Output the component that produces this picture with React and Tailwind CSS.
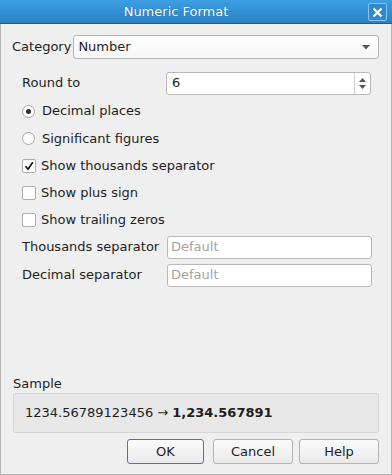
import React from 'react';

const font = { fontFamily: '"DejaVu Sans", "Liberation Sans", sans-serif' };

const Radio = ({ checked, label, h = 'h-[27px]' }) => (
  <div className={'flex items-center ' + h}>
    <div className="ml-[21px] flex h-[13px] w-[13px] items-center justify-center rounded-full border border-[#a9a9a9] bg-white">
      {checked && <div className="h-[5px] w-[5px] rounded-full bg-[#2e2e2e]"></div>}
    </div>
    <span className="ml-[7px]">{label}</span>
  </div>
);

const Check = ({ checked, label }) => (
  <div className="flex h-[27px] items-center">
    <div className="ml-[21px] flex h-[14px] w-[14px] items-center justify-center rounded-[2px] border border-[#adadad] bg-white">
      {checked && (
        <svg width="10" height="10" viewBox="0 0 10 10">
          <path d="M1.5 5.2 L4 8.2 L8.8 1.2" fill="none" stroke="#111" strokeWidth="1.7" />
        </svg>
      )}
    </div>
    <span className="ml-[5px]">{label}</span>
  </div>
);

const Field = ({ label, placeholder, value }) => (
  <div className="flex h-[28px] items-center">
    <span className="ml-[21px] w-[145px]">{label}</span>
    <div className="flex h-[23px] w-[205px] items-center rounded-[3px] border border-[#b9b9b9] bg-white pl-[3px]">
      {value ? <span>{value}</span> : <span className="text-[#a3a3a3]">{placeholder}</span>}
    </div>
  </div>
);

const Button = ({ children, primary, className }) => (
  <button
    className={
      'flex h-[25px] items-center justify-center rounded-[3px] border bg-gradient-to-b from-[#fbfbfb] to-[#e9e9e9] ' +
      (primary ? 'border-[#3d7bb5] from-[#f4f8fc] to-[#e2eaf2] ' : 'border-[#b3b3b3] ') +
      className
    }
  >
    {children}
  </button>
);

export default function App() {
  return (
    <div
      className="flex h-[475px] w-[392px] flex-col border-x border-b border-[#b5b5b5] bg-[#efefef] text-[13px] leading-[16px] text-[#1e1e1e]"
      style={font}
    >
      {/* title bar */}
      <div className="relative -mx-px flex h-[24px] shrink-0 items-center justify-center border-b border-[#1f5b8c] bg-gradient-to-b from-[#3d9fe3] to-[#2b80c4] pr-[40px]">
        <span className="text-white [text-shadow:0_0_1px_rgba(0,0,0,0.4)]">Numeric Format</span>
        <div className="absolute right-[5px] top-[3px] flex h-[18px] w-[19px] items-center justify-center rounded-[2px] border border-[#8cc3ee] bg-[#2f8ad0]">
          <svg width="11" height="11" viewBox="0 0 11 11">
            <path d="M1.5 1.5 L9.5 9.5 M9.5 1.5 L1.5 9.5" stroke="#fff" strokeWidth="2.2" />
          </svg>
        </div>
      </div>

      <div className="flex flex-1 flex-col">
        {/* category */}
        <div className="mt-[11px] flex h-[24px] items-center pl-[11px] pr-[12px]">
          <span>Category</span>
          <div className="ml-[2px] flex h-[24px] flex-1 items-center justify-between rounded-[3px] border border-[#b4b4b4] bg-gradient-to-b from-white to-[#f6f6f6] pl-[4px] pr-[8px]">
            <span>Number</span>
            <svg width="8" height="5" viewBox="0 0 8 5">
              <path d="M0 0 L8 0 L4 4.5 Z" fill="#555" />
            </svg>
          </div>
        </div>

        {/* round to */}
        <div className="mt-[10px] flex h-[28px] items-center">
          <span className="ml-[21px] w-[144px]">Round to</span>
          <div className="flex h-[23px] w-[205px] items-center rounded-[3px] border border-[#b9b9b9] bg-white">
            <span className="flex-1 pl-[5px]">6</span>
            <div className="flex h-full w-[16px] flex-col items-center justify-center gap-[3px] border-l border-[#d0d0d0]">
              <svg width="7" height="4" viewBox="0 0 7 4">
                <path d="M0 4 L7 4 L3.5 0 Z" fill="#555" />
              </svg>
              <svg width="7" height="4" viewBox="0 0 7 4">
                <path d="M0 0 L7 0 L3.5 4 Z" fill="#555" />
              </svg>
            </div>
          </div>
        </div>

        <Radio checked label="Decimal places" h="h-[28px]" />
        <Radio label="Significant figures" />
        <Check checked label="Show thousands separator" />
        <Check label="Show plus sign" />
        <Check label="Show trailing zeros" />
        <Field label="Thousands separator" placeholder="Default" />
        <Field label="Decimal separator" placeholder="Default" />

        <div className="flex-1"></div>

        {/* sample */}
        <div className="pl-[12px]">Sample</div>
        <div className="mx-[12px] mt-[1px] flex h-[40px] items-center rounded-[2px] border border-[#d6d6d6] bg-[#e8e8e8] pl-[11px]">
          <span>1234.56789123456 → </span>
          <span className="ml-[4px] font-bold">1,234.567891</span>
        </div>

        <div className="mb-[10px] mt-[6px] flex justify-end pr-[12px]">
          <Button primary className="w-[77px]">OK</Button>
          <Button className="ml-[9px] w-[80px]">Cancel</Button>
          <Button className="ml-[6px] w-[80px]">Help</Button>
        </div>
      </div>
    </div>
  );
}
